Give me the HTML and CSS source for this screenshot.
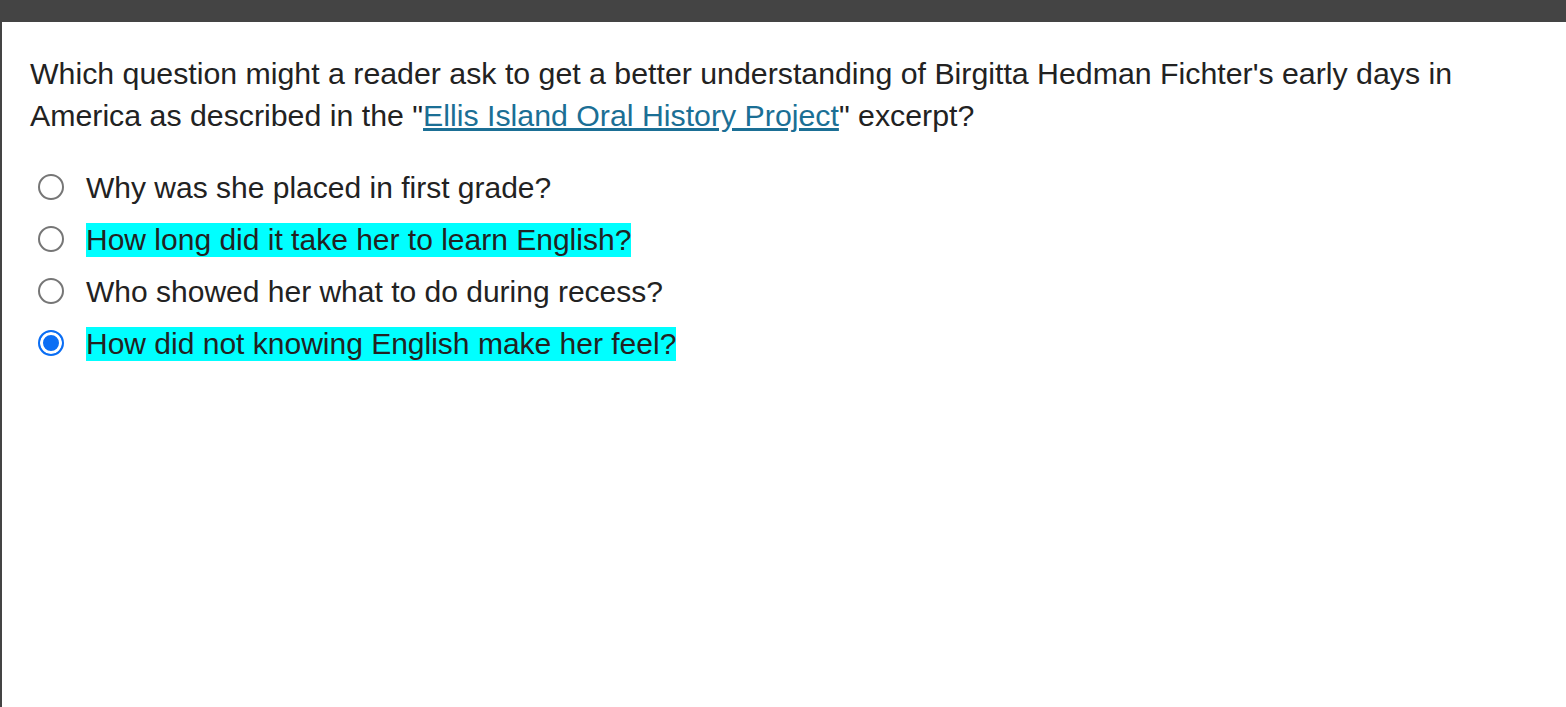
FILE: index.html
```html
<!DOCTYPE html>
<html>
<head>
<meta charset="utf-8">
<link rel="stylesheet" href="styles.css">
</head>
<body>
<div class="topbar"></div>
<main class="panel">
  <p class="question">Which question might a reader ask to get a better understanding of Birgitta Hedman Fichter's early days in America as described in the "<a href="#" class="link">Ellis Island Oral History Project</a>" excerpt?</p>
  <ul class="options">
    <li class="option"><span class="radio"></span><span class="label">Why was she placed in first grade?</span></li>
    <li class="option"><span class="radio"></span><span class="label hl">How long did it take her to learn English?</span></li>
    <li class="option"><span class="radio"></span><span class="label">Who showed her what to do during recess?</span></li>
    <li class="option"><span class="radio checked"></span><span class="label hl">How did not knowing English make her feel?</span></li>
  </ul>
</main>
</body>
</html>
```
FILE: styles.css
```css
html, body {
  margin: 0;
  padding: 0;
  background: #fff;
  height: 100%;
}
body {
  font-family: "Liberation Sans", Arial, sans-serif;
  color: #222;
  display: flex;
  flex-direction: column;
}
.topbar {
  height: 22px;
  background: #444;
  flex: none;
}
.panel {
  flex: 1;
  border-left: 2px solid #444;
  padding: 0 28px;
}
.question {
  margin: 31px 0 0;
  font-size: 30.3px;
  line-height: 42px;
  max-width: 1480px;
}
.link {
  color: #1b6f95;
  text-decoration: underline;
}
.options {
  list-style: none;
  margin: 33px 0 0;
  padding: 0;
  display: flex;
  flex-direction: column;
  gap: 16px;
}
.option {
  display: flex;
  align-items: center;
  height: 36px;
  font-size: 30px;
}
.radio {
  box-sizing: border-box;
  width: 26px;
  height: 26px;
  border: 2px solid #767676;
  border-radius: 50%;
  margin: -3px 22px 0 8px;
  flex: none;
}
.radio.checked {
  border: 2px solid #0b6ef4;
  background: #0b6ef4;
  box-shadow: inset 0 0 0 3px #fff;
}
.label {
  line-height: 34px;
}
.hl {
  background: #00ffff;
}
```
